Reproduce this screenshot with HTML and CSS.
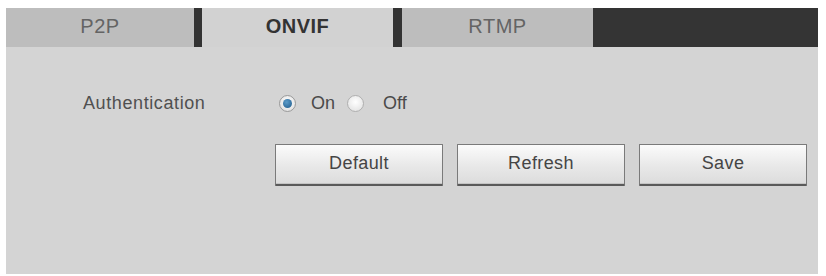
FILE: index.html
```html
<!DOCTYPE html>
<html>
<head>
<meta charset="utf-8">
<link rel="stylesheet" href="styles.css">
</head>
<body>
<div class="panel">
  <div class="tabs">
    <div class="tab tab-p2p">P2P</div>
    <div class="sep"></div>
    <div class="tab tab-active">ONVIF</div>
    <div class="sep sep-2"></div>
    <div class="tab tab-rtmp">RTMP</div>
    <div class="tab-fill"></div>
  </div>
  <div class="content">
    <div class="row">
      <div class="label">Authentication</div>
      <div class="radios">
        <span class="radio radio-on"><span class="dot"></span></span>
        <span class="opt opt-on">On</span>
        <span class="radio radio-off"></span>
        <span class="opt opt-off">Off</span>
      </div>
    </div>
    <div class="buttons">
      <button class="btn">Default</button>
      <button class="btn">Refresh</button>
      <button class="btn">Save</button>
    </div>
  </div>
</div>
</body>
</html>
```
FILE: styles.css
```css
html, body {
  margin: 0;
  padding: 0;
  background: #ffffff;
}
body {
  font-family: "Liberation Sans", Arial, sans-serif;
  width: 826px;
  height: 276px;
  overflow: hidden;
}
.panel {
  margin: 8px 0 0 6px;
  width: 812px;
  height: 266px;
  background: #d4d4d4;
  display: flex;
  flex-direction: column;
}
.tabs {
  display: flex;
  height: 39px;
}
.tab {
  display: flex;
  align-items: center;
  justify-content: center;
  font-size: 20px;
  letter-spacing: 0.5px;
  color: #646464;
  background: #bdbdbd;
  padding-bottom: 2px;
  box-sizing: border-box;
}
.tab-p2p { width: 188px; }
.tab-rtmp { width: 191px; }
.tab-active {
  width: 191px;
  background: #d2d2d2;
  color: #333333;
  font-weight: bold;
}
.sep {
  width: 8px;
  background: #333333;
}
.sep-2 { width: 9px; }
.tab-fill {
  flex: 1;
  background: #343434;
}
.content {
  padding: 44px 0 0 77px;
}
.row {
  display: flex;
  align-items: center;
  height: 24px;
}
.label {
  width: 194px;
  font-size: 18px;
  color: #505050;
  letter-spacing: 0.6px;
}
.radios {
  display: flex;
  align-items: center;
  font-size: 18px;
  color: #4a4a4a;
}
.radio {
  width: 17px;
  height: 17px;
  border-radius: 50%;
  box-sizing: border-box;
  display: flex;
  align-items: center;
  justify-content: center;
}
.radio-on {
  margin-left: 2px;
  border: 1px solid #9a9a9a;
  background: radial-gradient(circle at 50% 40%, #ffffff, #d8d8d8);
}
.dot {
  width: 9px;
  height: 9px;
  border-radius: 50%;
  background: radial-gradient(circle at 40% 35%, #5a9ac8, #1e5a8a);
}
.radio-off {
  border: 1px solid #b0b0b0;
  background: radial-gradient(circle at 50% 40%, #ffffff, #dedede);
}
.opt-on {
  margin: 0 12px 0 15px;
}
.opt-off {
  margin-left: 19px;
}
.buttons {
  display: flex;
  gap: 14px;
  margin: 29px 0 0 192px;
}
.btn {
  width: 168px;
  height: 42px;
  font-family: "Liberation Sans", Arial, sans-serif;
  font-size: 18px;
  letter-spacing: 0.4px;
  color: #454545;
  border: 1px solid #7a7a7a;
  border-bottom: 2px solid #5a5a5a;
  border-radius: 1px;
  background: linear-gradient(#fbfbfb, #e8e8e8 55%, #dcdcdc);
  box-shadow: inset 0 -1px 0 #c4c4c4;
  padding: 0 0 2px 0;
}
```
